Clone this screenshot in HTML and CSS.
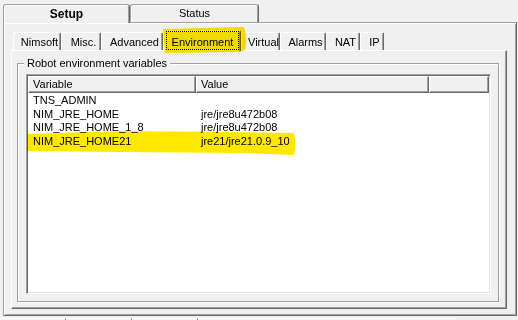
FILE: index.html
```html
<!DOCTYPE html>
<html lang="en">
<head>
    <meta charset="UTF-8">
    <title>Robot setup</title>
    <link rel="stylesheet" href="styles.css">
</head>
<body>
    <div class="sheet">
        <div class="top-tabs">
            <div class="top-tab setup">Setup</div>
            <div class="top-tab status">Status</div>
        </div>
        <div class="panel">
            <div class="sub-tabs">
                <div class="sub-tab" style="width:48px">Nimsoft</div>
                <div class="sub-tab" style="width:40px">Misc.</div>
                <div class="sub-tab" style="width:62px">Advanced</div>
                <div class="sub-tab active" style="width:78px"><span class="focus">Environment</span></div>
                <div class="sub-tab" style="width:39px">Virtual</div>
                <div class="sub-tab" style="width:46px">Alarms</div>
                <div class="sub-tab" style="width:34px">NAT</div>
                <div class="sub-tab" style="width:24px">IP</div>
            </div>
            <div class="page">
                <div class="group">
                    <div class="group-title">Robot environment variables</div>
                    <div class="list">
                        <div class="list-head">
                            <div class="col">Variable</div>
                            <div class="col">Value</div>
                            <div class="col"></div>
                        </div>
                        <div class="rows">
                            <div class="row"><span>TNS_ADMIN</span><span></span></div>
                            <div class="row"><span>NIM_JRE_HOME</span><span>jre/jre8u472b08</span></div>
                            <div class="row"><span>NIM_JRE_HOME_1_8</span><span>jre/jre8u472b08</span></div>
                            <div class="row"><span>NIM_JRE_HOME21</span><span>jre21/jre21.0.9_10</span></div>
                        </div>
                    </div>
                </div>
            </div>
        </div>
    </div>
    <div class="foot">
        <span></span><span></span><span></span><span class="wide"></span>
    </div>

    <!-- marker strokes drawn over the screenshot -->
    <svg class="marks" width="518" height="320" viewBox="0 0 518 320">
        <path d="M163,29 L244,27 Q248,38 245,50 L240,52 L165,53 Z" fill="#ffe800"/>
        <path d="M27,134 L120,131 L230,132 L294,133 Q297,144 294,155 L240,153 L120,152 L27,151 Z" fill="#ffe800"/>
    </svg>
</body>
</html>
```

FILE: styles.css
```css
* {
    box-sizing: border-box;
}
body {
    margin: 0;
    width: 518px;
    height: 320px;
    overflow: hidden;
    position: relative;
    background: #f0f0f0;
    font-family: "Liberation Sans", Arial, sans-serif;
    font-size: 11px;
    color: #000;
}
.sheet {
    padding: 4px 1px 0 3px;
}
.top-tabs {
    display: flex;
    height: 18px;
}
.top-tab {
    height: 18px;
    padding-top: 1px;
    line-height: 15px;
    text-align: center;
    background: #f0f0f0;
    border: 1px solid #a0a0a0;
    border-bottom: 0;
    border-right-color: #696969;
    border-radius: 3px 3px 0 0;
    box-shadow: inset 1px 1px #fff, inset -1px 0 #a0a0a0;
}
.setup {
    width: 127px;
    height: 19px;
    margin-bottom: -1px;
    position: relative;
    z-index: 1;
    font-size: 12px;
    font-weight: bold;
    line-height: 16px;
}
.status {
    width: 129px;
}
.panel {
    height: 294px;
    padding: 7px 9px 0 7px;
    border: 1px solid #a0a0a0;
    border-right-color: #696969;
    border-bottom-color: #696969;
    box-shadow: inset 1px 1px #fff, inset -1px -1px #a0a0a0;
}
.sub-tabs {
    display: flex;
    align-items: flex-end;
    height: 20px;
    padding-left: 2px;
}
.sub-tab {
    height: 18px;
    padding: 2px 1px 0 6px;
    line-height: 15px;
    text-align: center;
    white-space: nowrap;
    border: 1px solid #fff;
    border-bottom: 0;
    border-right-color: #696969;
    border-radius: 2px 2px 0 0;
    box-shadow: inset -1px 0 #a0a0a0;
}
.sub-tab.active {
    height: 21px;
    margin-bottom: -1px;
    padding: 0 1px 1px 2px;
    position: relative;
    z-index: 1;
    background: #f0f0f0;
}
.focus {
    display: block;
    height: 19px;
    padding-top: 3px;
    line-height: 14px;
    border: 1px dotted #000;
}
.page {
    height: 259px;
    padding: 12px 7px 0 5px;
    border: 1px solid #fff;
    border-right-color: #696969;
    border-bottom-color: #696969;
    box-shadow: inset -1px -1px #a0a0a0;
}
.group {
    height: 239px;
    padding: 0 7px 0 8px;
    border: 1px solid #a0a0a0;
    box-shadow: inset 1px 1px #fff, 1px 1px #fff;
}
.group-title {
    width: max-content;
    height: 13px;
    margin: -7px 0 0 -2px;
    padding: 0 3px;
    line-height: 13px;
    background: #f0f0f0;
}
.list {
    height: 220px;
    margin-top: 4px;
    padding: 1px;
    background: #fff;
    border: 1px solid #a0a0a0;
    border-right-color: #fff;
    border-bottom-color: #fff;
    box-shadow: inset 1px 1px #696969, inset -1px -1px #e3e3e3;
}
.list-head,
.row {
    display: grid;
    grid-template-columns: 168px 233px 1fr;
}
.list-head {
    height: 17px;
    background: #f0f0f0;
}
.col {
    padding-left: 4px;
    line-height: 15px;
    border: 1px solid #fff;
    border-right-color: #696969;
    border-bottom-color: #696969;
    box-shadow: inset -1px -1px #a0a0a0;
}
.rows {
    padding-top: 1px;
}
.row {
    height: 13.5px;
    line-height: 13.5px;
}
.row span {
    padding-left: 5px;
    white-space: nowrap;
}
.foot {
    display: flex;
    height: 2px;
    margin-top: 2px;
}
.foot span {
    width: 66px;
    border-top: 1px solid #fff;
    border-right: 1px solid #808080;
}
.foot .wide {
    width: 258px;
    border-right: 0;
}
.marks {
    position: absolute;
    left: 0;
    top: 0;
    z-index: 2;
    pointer-events: none;
    mix-blend-mode: multiply;
}
```
